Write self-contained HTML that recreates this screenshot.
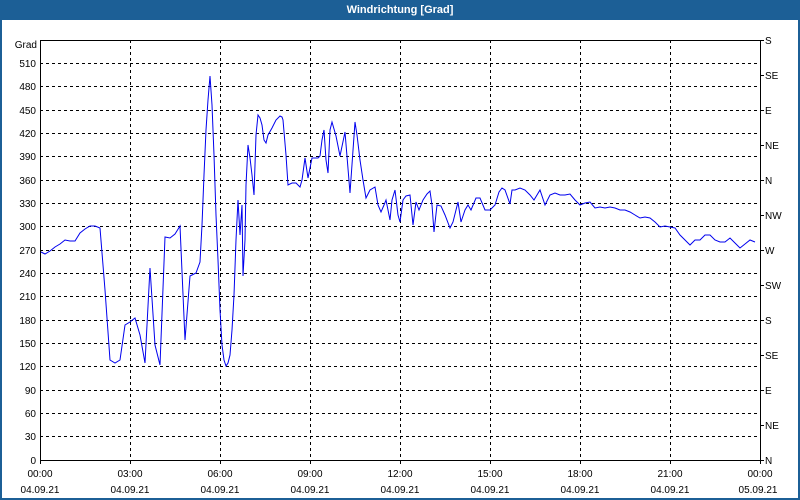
<!DOCTYPE html>
<html><head><style>
html,body{margin:0;padding:0;background:#fff;}
body{width:800px;height:500px;overflow:hidden;position:relative;font-family:"Liberation Sans",Tahoma,sans-serif;}
</style></head><body>
<svg width="800" height="500" xmlns="http://www.w3.org/2000/svg" style="position:absolute;left:0;top:0">
<rect x="0" y="0" width="800" height="500" fill="#1c5f96"/>
<rect x="2" y="20" width="796" height="478" fill="#fff"/>
<text x="400" y="13" fill="#fff" font-size="11" font-weight="bold" text-anchor="middle" font-family="Liberation Sans, sans-serif">Windrichtung [Grad]</text>
<g stroke="#000" stroke-dasharray="3,3" stroke-width="1" shape-rendering="crispEdges">
<line x1="40" x2="760" y1="63.5" y2="63.5"/><line x1="40" x2="760" y1="86.5" y2="86.5"/><line x1="40" x2="760" y1="110.5" y2="110.5"/><line x1="40" x2="760" y1="133.5" y2="133.5"/><line x1="40" x2="760" y1="156.5" y2="156.5"/><line x1="40" x2="760" y1="180.5" y2="180.5"/><line x1="40" x2="760" y1="203.5" y2="203.5"/><line x1="40" x2="760" y1="226.5" y2="226.5"/><line x1="40" x2="760" y1="250.5" y2="250.5"/><line x1="40" x2="760" y1="273.5" y2="273.5"/><line x1="40" x2="760" y1="296.5" y2="296.5"/><line x1="40" x2="760" y1="320.5" y2="320.5"/><line x1="40" x2="760" y1="343.5" y2="343.5"/><line x1="40" x2="760" y1="366.5" y2="366.5"/><line x1="40" x2="760" y1="390.5" y2="390.5"/><line x1="40" x2="760" y1="413.5" y2="413.5"/><line x1="40" x2="760" y1="436.5" y2="436.5"/>
<line y1="40" y2="460" x1="130.5" x2="130.5"/><line y1="40" y2="460" x1="220.5" x2="220.5"/><line y1="40" y2="460" x1="310.5" x2="310.5"/><line y1="40" y2="460" x1="400.5" x2="400.5"/><line y1="40" y2="460" x1="490.5" x2="490.5"/><line y1="40" y2="460" x1="580.5" x2="580.5"/><line y1="40" y2="460" x1="670.5" x2="670.5"/>
</g>
<rect x="40.5" y="40.5" width="720" height="420" fill="none" stroke="#000" shape-rendering="crispEdges"/>
<g stroke="#000" shape-rendering="crispEdges">
<line x1="40.5" x2="40.5" y1="460" y2="464"/><line x1="130.5" x2="130.5" y1="460" y2="464"/><line x1="220.5" x2="220.5" y1="460" y2="464"/><line x1="310.5" x2="310.5" y1="460" y2="464"/><line x1="400.5" x2="400.5" y1="460" y2="464"/><line x1="490.5" x2="490.5" y1="460" y2="464"/><line x1="580.5" x2="580.5" y1="460" y2="464"/><line x1="670.5" x2="670.5" y1="460" y2="464"/><line x1="760.5" x2="760.5" y1="460" y2="464"/>
<line x1="760" x2="764" y1="40.5" y2="40.5"/><line x1="760" x2="764" y1="75.5" y2="75.5"/><line x1="760" x2="764" y1="110.5" y2="110.5"/><line x1="760" x2="764" y1="145.5" y2="145.5"/><line x1="760" x2="764" y1="180.5" y2="180.5"/><line x1="760" x2="764" y1="215.5" y2="215.5"/><line x1="760" x2="764" y1="250.5" y2="250.5"/><line x1="760" x2="764" y1="285.5" y2="285.5"/><line x1="760" x2="764" y1="320.5" y2="320.5"/><line x1="760" x2="764" y1="355.5" y2="355.5"/><line x1="760" x2="764" y1="390.5" y2="390.5"/><line x1="760" x2="764" y1="425.5" y2="425.5"/><line x1="760" x2="764" y1="460.5" y2="460.5"/>
</g>
<g font-size="10" fill="#000" text-anchor="end" font-family="Liberation Sans, sans-serif">
<text x="37" y="48">Grad</text><text x="36" y="67">510</text><text x="36" y="90">480</text><text x="36" y="114">450</text><text x="36" y="137">420</text><text x="36" y="160">390</text><text x="36" y="184">360</text><text x="36" y="207">330</text><text x="36" y="230">300</text><text x="36" y="254">270</text><text x="36" y="277">240</text><text x="36" y="300">210</text><text x="36" y="324">180</text><text x="36" y="347">150</text><text x="36" y="370">120</text><text x="36" y="394">90</text><text x="36" y="417">60</text><text x="36" y="440">30</text><text x="36" y="464">0</text>
</g>
<g font-size="10" fill="#000" font-family="Liberation Sans, sans-serif">
<text x="765" y="44">S</text><text x="765" y="79">SE</text><text x="765" y="114">E</text><text x="765" y="149">NE</text><text x="765" y="184">N</text><text x="765" y="219">NW</text><text x="765" y="254">W</text><text x="765" y="289">SW</text><text x="765" y="324">S</text><text x="765" y="359">SE</text><text x="765" y="394">E</text><text x="765" y="429">NE</text><text x="765" y="464">N</text>
</g>
<g font-size="10" fill="#000" text-anchor="middle" font-family="Liberation Sans, sans-serif">
<text x="40" y="477">00:00</text><text x="130" y="477">03:00</text><text x="220" y="477">06:00</text><text x="310" y="477">09:00</text><text x="400" y="477">12:00</text><text x="490" y="477">15:00</text><text x="580" y="477">18:00</text><text x="670" y="477">21:00</text><text x="760" y="477">00:00</text>
<text x="40" y="493">04.09.21</text><text x="130" y="493">04.09.21</text><text x="220" y="493">04.09.21</text><text x="310" y="493">04.09.21</text><text x="400" y="493">04.09.21</text><text x="490" y="493">04.09.21</text><text x="580" y="493">04.09.21</text><text x="670" y="493">04.09.21</text><text x="758" y="493">05.09.21</text>
</g>
<polyline fill="none" stroke="#0000ee" stroke-width="1" points="41,252 45,254 50,251 55,247 60,244 65,240 70,241 75,241 80,233 85,229 90,226 95,226 100,228 105,290 110,360 115,363 120,360 125,325 130,322 135,318 140,335 145,363 150,268 155,345 160,365 165,237 170,238 175,234 180,226 185,340 190,276 196,273 200,262 202,225 204,175 206,130 208,100 210,76 212,105 214,155 216,215 218,260 220,310 222,345 224,360 226,366 228,363 230,355 232,330 234,295 236,240 238,200 240,235 242,205 243,276 245,240 246,185 248,145 250,158 252,175 254,195 256,135 258,115 260,118 262,125 264,140 266,143 268,135 272,128 276,120 280,116 282,117 283,120 286,155 288,185 292,183 296,183 298,185 300,187 302,180 305,158 308,178 310,168 312,158 318,158 320,156 322,140 324,130 326,160 328,173 330,130 332,122 336,136 340,156 345,132 350,193 355,122 357,135 360,160 363,180 366,198 370,190 375,187 378,205 381,212 384,205 386,200 388,210 390,220 392,200 395,190 398,215 400,222 403,200 406,196 410,195 413,225 416,202 419,210 423,200 427,194 430,191 432,205 434,232 437,205 441,206 445,215 450,228 453,222 458,202 461,222 465,210 468,205 471,210 476,198 480,198 485,210 490,210 495,205 499,192 502,188 505,190 510,204 512,190 515,190 520,188 525,190 530,195 534,200 540,190 545,205 550,195 555,193 560,195 565,195 570,194 575,200 580,205 585,203 590,202 595,208 600,207 605,208 610,207 615,208 620,210 625,210 630,212 635,215 640,218 645,217 650,218 655,222 660,227 665,226 670,227 675,228 680,235 685,240 690,245 695,240 700,240 705,235 710,235 715,240 720,242 725,242 730,238 735,243 740,248 745,244 750,240 755,242"/>
</svg>
</body></html>
